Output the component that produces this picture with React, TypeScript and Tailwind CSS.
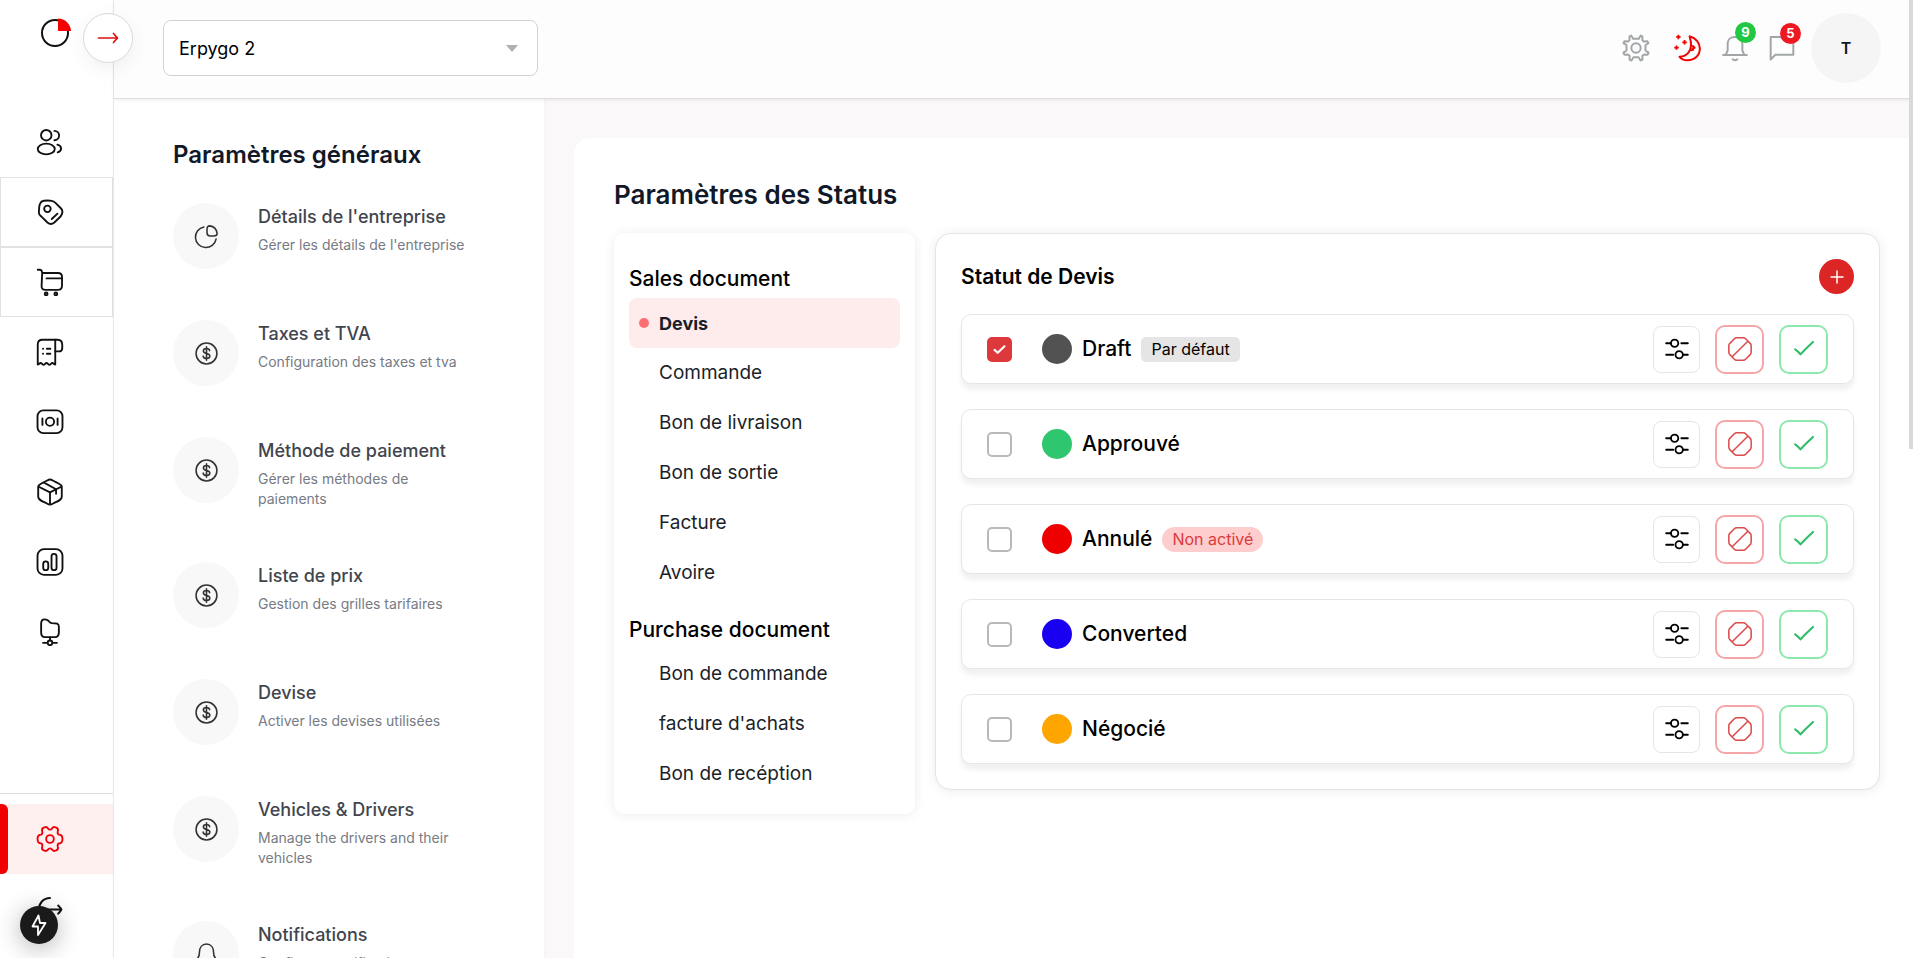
import { useState, type ReactNode } from "react";

type IconProps = { size?: number; stroke?: number; className?: string; children?: ReactNode };

function Icon({ size = 28, stroke = 1.5, className = "", children }: IconProps) {
  return (
    <svg
      width={size}
      height={size}
      viewBox="0 0 24 24"
      fill="none"
      stroke="currentColor"
      strokeWidth={stroke}
      strokeLinecap="round"
      strokeLinejoin="round"
      aria-hidden="true"
      className={`shrink-0 ${className}`}
    >
      {children}
    </svg>
  );
}

const UsersIcon = () => (
  <Icon stroke={1.600}>
    <circle cx="8.800" cy="6.200" r="4.500" />
    <ellipse cx="8.800" cy="18" rx="7.300" ry="4.600" />
    <path d="M15.800 2.500a4 4 0 0 1 0 8M18.300 14.300c2 .5 3.200 1.700 3.200 3.300s-1 2.700-2.900 3.300" />
  </Icon>
);

const TagIcon = () => (
  <Icon stroke={1.600}>
    <circle cx="9.800" cy="9.300" r="2.800" />
    <path d="M2.500 12.800C2.500 9 2.700 6.500 3.500 4.800 4.100 3.300 5.100 2.600 6.700 2.400c2.300-.3 4.800-.3 6.800 0 1.400.2 2.200.8 3.200 1.800l4.800 4.800c1.200 1.300 1.400 2.800.8 4.600-.5 1.400-1.500 2.600-2.800 3.800L15.700 21c-2 1.800-3.900 1.800-5.900 0l-5.300-5.200c-1.200-1.100-2-1.600-2-3z" />
    <path d="M13.500 18l4.900-4.600" />
  </Icon>
);

const CartIcon = () => (
  <Icon stroke={1.600}>
    <path d="M1.500 1.500h1.700c1.100 0 1.800.7 1.900 1.800l.2 1M5.300 4.300h13.500c2.300 0 3.500 1 3.500 3.200v7.500c0 2.600-1.200 3.800-3.600 3.800H8.100c-2.300 0-3.400-1.200-3.300-3.500z" />
    <path d="M9 8.900h13" />
    <circle cx="8.700" cy="22.200" r="1.200" />
    <circle cx="17" cy="22.200" r="1.200" />
  </Icon>
);

const ReceiptIcon = () => (
  <Icon stroke={1.600}>
    <path d="M16.500 22.700V1.500H5.500C2.700 1.500 1.500 2.800 1.500 5.500v17.200c1 0 1.500-1.300 2.500-1.300s1.500 1.600 2.500 1.600 1.500-1.600 2.500-1.600 1.500 1.600 2.500 1.600 1.500-1.600 2.500-1.600 1.500 1.300 2.500 1.300z" />
    <path d="M16.500 1.500h2c2.700 0 4 1.700 4 4.500v2.500c0 2-1 3-2.800 3h-3.200" />
    <path d="M6 9.200h.1M9.300 9.200h3M6 13.500h.1M9.300 13.500h3" />
  </Icon>
);

const MoneyIcon = () => (
  <Icon stroke={1.600}>
    <rect x="1.300" y="2" width="21.400" height="19.500" rx="5" />
    <circle cx="12" cy="11.800" r="3.500" />
    <path d="M5.500 9v5.500M18.500 9v5.500" />
  </Icon>
);

const PackageIcon = () => (
  <Icon stroke={1.600}>
    <path d="M12 22.800c-.8 0-1.600-.4-3.100-1.200-5.100-2.300-7-3.300-7-5.500V7.300M12 22.800c.8 0 1.600-.4 3.100-1.200 5.100-2.300 7-3.300 7-5.500V7.300M12 22.800V12.300M1.900 7.300c0-1.400 1.600-2.100 5.100-3.800 2.700-1.300 3.800-2.200 5-2.200s2.300.9 5 2.200c3.500 1.700 5.100 2.400 5.100 3.800M1.900 7.300 12 12.300l10.100-5M6.500 3.800l10.700 5.800v4" />
  </Icon>
);

const ChartIcon = () => (
  <Icon stroke={1.600}>
    <rect x="1.300" y="1" width="21.400" height="22" rx="5.500" />
    <rect x="6.200" y="11.500" width="4.300" height="7.500" rx="2.100" />
    <rect x="13.300" y="5" width="4.300" height="14" rx="2.100" />
  </Icon>
);

const FolderIcon = () => (
  <Icon stroke={1.600}>
    <path d="M4.400 5c0-2 .8-3.800 2.900-3.800 2.400 0 3 .2 3.900 1.800.7 1.100 1.200 1.300 2.500 1.400 4 0 5.900 0 5.900 3.200v4.900c0 2.800-.8 3.900-3.200 3.900H7.600c-2.400 0-3.200-1.100-3.200-3.900z" />
    <path d="M12 16.600v2.700M6 21.300h3.800M14.200 21.300H18" />
    <circle cx="12" cy="21.300" r="2" />
  </Icon>
);

const SettingsIcon = () => (
  <Icon stroke={1.600}>
    <circle cx="12" cy="12" r="3.300" />
    <path d="M12 4c.7 0 1.200-.3 1.700-1.100.5-.8 1.300-1.300 2.200-1.100l1.500.5c1.300.5 1.700 1.700 1.300 3-.4 1.500-.1 2.500.9 2.900 2.500 0 3.100 1.200 3.100 3.800s-.6 3.800-3.100 3.800c-1 .4-1.300 1.400-.9 2.900.4 1.300 0 2.500-1.300 3l-1.500.5c-.9.2-1.700-.3-2.200-1.100S12.700 20 12 20s-1.200.3-1.700 1.100c-.5.8-1.300 1.300-2.200 1.100l-1.500-.5c-1.300-.5-1.700-1.700-1.300-3 .4-1.500.1-2.500-.9-2.900-2.500 0-3.100-1.200-3.100-3.800s.6-3.800 3.100-3.800c1-.4 1.300-1.400.9-2.900-.4-1.300 0-2.500 1.300-3l1.500-.5c.9-.2 1.700.3 2.200 1.100S11.300 4 12 4z" />
  </Icon>
);

const LogoutIcon = () => (
  <Icon stroke={1.700}>
    <path d="M12 2.500C6.500 2.500 2.500 6.800 2.500 12.500s4 9.500 9.500 9.500M8.500 12.500h13.300M19 9c1.500 1.700 2.800 2.600 2.800 3.500S20.500 14.300 19 16" />
  </Icon>
);

const DollarIcon = () => (
  <Icon size={25}>
    <circle cx="12" cy="12" r="10" />
    <path d="M15 9.300c-.2-1.300-1.400-2.100-3-2.100-1.700 0-3 .9-3 2.400 0 3.300 6.200 1.500 6.200 4.800 0 1.500-1.300 2.400-3.200 2.400-1.800 0-3.100-.8-3.200-2.300M12 5.500v13" />
  </Icon>
);

const PieIcon = () => (
  <Icon size={25}>
    <path d="M9.500 2.800A10 10 0 1 0 21.200 14.500" />
    <path d="M12.500 5c0-2 .7-3.200 2.700-3.200 4 .6 6.300 3 7 7 0 2-1.200 2.700-3.200 2.700h-3.500c-2 0-3-1-3-3z" />
  </Icon>
);

const BellIcon = () => (
  <Icon size={25}>
    <path d="M5.200 10c0-4.500 2.500-8 6.800-8s6.800 3.500 6.800 8c0 3 .4 3.700 1.500 5.200 1 1.400.3 2.800-1.500 2.800H5.200c-1.800 0-2.500-1.400-1.500-2.800C4.800 13.700 5.200 13 5.200 10zM9 21c.8.7 1.800 1 3 1s2.200-.3 3-1" />
  </Icon>
);

const SlidersIcon = () => (
  <Icon size={26} stroke={1.700}>
    <path d="M2 6.700h4.300M16 6.700h6M2 17.300h6.500M17.500 17.300H22" />
    <circle cx="9.800" cy="6.700" r="3.400" />
    <circle cx="14" cy="17.300" r="3.400" />
  </Icon>
);

const BanIcon = () => (
  <Icon size={26} stroke={1.400}>
    <path d="M9 1.700h6c1 0 1.500.2 2.200.9l4.200 4.200c.7.700.9 1.200.9 2.200v6c0 1-.2 1.500-.9 2.200l-4.200 4.200c-.7.700-1.200.9-2.200.9H9c-1 0-1.500-.2-2.200-.9l-4.200-4.200c-.7-.7-.9-1.200-.9-2.200V9c0-1 .2-1.500.9-2.200l4.200-4.200c.7-.7 1.200-.9 2.200-.9zM5 19 19 5" />
  </Icon>
);

const nav: { label: string; icon: ReactNode; boxed?: boolean }[] = [
  { label: "Clients", icon: <UsersIcon /> },
  { label: "Ventes", icon: <TagIcon />, boxed: true },
  { label: "Achats", icon: <CartIcon />, boxed: true },
  { label: "Factures", icon: <ReceiptIcon /> },
  { label: "Paiements", icon: <MoneyIcon /> },
  { label: "Stock", icon: <PackageIcon /> },
  { label: "Rapports", icon: <ChartIcon /> },
  { label: "Fichiers", icon: <FolderIcon /> },
];

const settings: { title: string; text: string; icon: ReactNode }[] = [
  { title: "Détails de l'entreprise", text: "Gérer les détails de l'entreprise", icon: <PieIcon /> },
  { title: "Taxes et TVA", text: "Configuration des taxes et tva", icon: <DollarIcon /> },
  { title: "Méthode de paiement", text: "Gérer les méthodes de paiements", icon: <DollarIcon /> },
  { title: "Liste de prix", text: "Gestion des grilles tarifaires", icon: <DollarIcon /> },
  { title: "Devise", text: "Activer les devises utilisées", icon: <DollarIcon /> },
  { title: "Vehicles & Drivers", text: "Manage the drivers and their vehicles", icon: <DollarIcon /> },
  { title: "Notifications", text: "Configurer notifications", icon: <BellIcon /> },
];

const groups = [
  { title: "Sales document", items: ["Devis", "Commande", "Bon de livraison", "Bon de sortie", "Facture", "Avoire"] },
  { title: "Purchase document", items: ["Bon de commande", "facture d'achats", "Bon de recéption"] },
];

const statuses = [
  { name: "Draft", dot: "bg-[#525252]", tag: "default" },
  { name: "Approuvé", dot: "bg-[#2fc670]", tag: "" },
  { name: "Annulé", dot: "bg-[#ee0000]", tag: "off" },
  { name: "Converted", dot: "bg-[#1a00f0]", tag: "" },
  { name: "Négocié", dot: "bg-[#ffa500]", tag: "" },
];

function Sidebar() {
  return (
    <aside className="flex w-[114px] shrink-0 flex-col border-r border-[#ececec] bg-white pb-3.5 shadow-[1px_0_4px_rgba(0,0,0,0.04)]">
      <a href="#accueil" aria-label="Accueil" className="flex h-[107px] pt-4 pl-10">
        <svg width="32" height="32" viewBox="0 0 32 32" fill="none" aria-hidden="true">
          <circle cx="15" cy="17" r="13" stroke="#111" strokeWidth="2" />
          <path d="M18 2.500a13 13 0 0 1 13 12.500H18z" fill="#f50000" />
        </svg>
      </a>
      <nav className="flex flex-col">
        {nav.map((n) => (
          <a
            key={n.label}
            href="#menu"
            aria-label={n.label}
            className={`flex h-[70px] items-center border pl-[35px] text-[#111] ${n.boxed ? "border-[#e2e2e2]" : "border-transparent"}`}
          >
            {n.icon}
          </a>
        ))}
      </nav>
      <div className="mt-auto border-t border-[#dedede] pt-2.5">
        <a href="#parametres" aria-label="Paramètres" className="flex h-[70px] items-center bg-[#fff0f0] text-[#ee0008]">
          <span className="h-full w-2 rounded-r-md bg-[#f00000]" />
          <span className="pl-7">
            <SettingsIcon />
          </span>
        </a>
        <button type="button" aria-label="Déconnexion" className="flex h-[70px] w-full items-center pl-9 text-[#111]">
          <LogoutIcon />
        </button>
      </div>
    </aside>
  );
}

function Header() {
  return (
    <header className="z-10 flex h-[99px] shrink-0 items-center justify-between border-b border-[#dedede] bg-[#fdfdfd] pr-8 pb-0.5 pl-[49px] shadow-[0_1px_4px_rgba(0,0,0,0.08)]">
      <div className="relative w-[375px]">
        <select
          aria-label="Entreprise"
          className="h-[56px] w-full appearance-none rounded-lg border border-[#d2d2d2] bg-white px-[15px] text-[18px] text-black"
        >
          <option>Erpygo 2</option>
        </select>
        <svg width="12" height="7" viewBox="0 0 12 7" aria-hidden="true" className="pointer-events-none absolute top-[25px] right-5">
          <path d="M0 0h12L6 7z" fill="#b0b0b0" />
        </svg>
      </div>
      <div className="flex items-center text-[#a3a6a8]">
        <button type="button" aria-label="Réglages">
          <Icon size={28} stroke={1.700}>
            <circle cx="12" cy="12" r="4" />
            <path d="M9.500 4.100 8 1.400l-1.600.7.100 3.100-1.300 1.200-3.100-.2-.8 1.700 2.600 1.700v4.500L1.200 16l.8 1.700 3.100-.2 1.500 1.400-.2 3.100 1.700.7 1.700-2.700h4.400l1.700 2.700 1.700-.7-.2-3.100 1.500-1.400 3.100.2.800-1.700-2.700-1.900V9.600l2.500-1.700-.8-1.700-3.100.2-1.300-1.200.1-3.100-1.600-.7-1.500 2.700z" />
          </Icon>
        </button>
        <button type="button" aria-label="Mode sombre" className="ml-[23px] text-[#f00000]">
          <Icon size={28} stroke={1.700}>
            <path d="M14.200 2C20 3.500 23 8 23 12.500c0 6-4.500 10-10.500 10-3 0-5.500-1-7-3C12.500 19.500 18 13.500 14.200 2z" />
            <path d="M17 10.300l1.500 1.500-1.700.6.500 1.200-1.600.3" />
            <path d="M4.600.6v3.800M2.700 2.500h3.800M9.900 5.200V9M8 7.100h3.800M3 9.800v3.800M1.100 11.700h3.800" strokeWidth="1.500" strokeLinecap="butt" />
          </Icon>
        </button>
        <button type="button" aria-label="Notifications" className="relative ml-5">
          <Icon size={28} stroke={1.700}>
            <path d="M1.800 18h20.400M4 18l1.700-4V8c0-3.300 2.700-5.500 6.300-5.500S18.300 4.700 18.300 8v6L20 18M10 21.700c1.200 1 2.800 1 4 0" />
          </Icon>
          <span className="absolute -top-3 left-3.5 flex size-[21px] items-center justify-center rounded-full bg-[#22c744] text-[13px] font-bold text-white">9</span>
        </button>
        <button type="button" aria-label="Messages" className="relative ml-[19px]">
          <Icon size={28} stroke={1.700}>
            <path d="M2.300 2.500h19.400v15.300H6.300l-4 4z" />
          </Icon>
          <span className="absolute -top-[11px] left-3 flex size-[21px] items-center justify-center rounded-full bg-[#f01820] text-[13px] font-bold text-white">5</span>
        </button>
        <button type="button" aria-label="Profil" className="ml-[15px] flex size-[70px] items-center justify-center rounded-full bg-[#f5f5f5] text-[16px] font-semibold text-[#111827]">
          T
        </button>
      </div>
    </header>
  );
}

function SettingsList() {
  return (
    <section className="w-[430px] shrink-0 overflow-hidden bg-white pt-10 pr-[70px] pl-[59px] shadow-[0_0_4px_rgba(0,0,0,0.04)]">
      <h2 className="text-[24px] leading-8 font-semibold text-[#111827]">Paramètres généraux</h2>
      <ul className="mt-8">
        {settings.map((s) => (
          <li key={s.title}>
            <a href="#reglage" className="flex min-h-[117px] items-start gap-[19px]">
              <span className="flex size-[66px] shrink-0 items-center justify-center rounded-full bg-[#f8f8f8] text-[#333]">{s.icon}</span>
              <span className="block pb-[53px]">
                <span className="block text-[18px] leading-7 font-medium text-[#41454d]">{s.title}</span>
                <span className="mt-1 block text-[14px] leading-5 text-[#767b84]">{s.text}</span>
              </span>
            </a>
          </li>
        ))}
      </ul>
    </section>
  );
}

function StatusRow({ name, dot, tag, checked, onToggle }: { name: string; dot: string; tag: string; checked: boolean; onToggle: () => void }) {
  return (
    <li className="flex h-[70px] items-center rounded-[10px] border border-[#e6e6e6] bg-white px-[25px] shadow-[0_6px_5px_rgba(0,0,0,0.06)]">
      <label className="flex items-center text-[21px] leading-8 font-medium text-black">
        <span className="relative flex size-[25px]">
          <input
            type="checkbox"
            checked={checked}
            onChange={onToggle}
            className="size-[25px] appearance-none rounded-[5px] border-2 border-[#b9b9b9] bg-white checked:border-[#dd393d] checked:bg-[#dd393d]"
          />
          {checked && (
            <Icon size={17} stroke={3} className="pointer-events-none absolute top-1 left-1 text-white">
              <path d="M5 12.500l4.500 4.200L19 7.500" />
            </Icon>
          )}
        </span>
        <span className={`mr-2.5 ml-[30px] size-[30px] rounded-full ${dot}`} />
        {name}
      </label>
      {tag === "default" && <span className="ml-2.5 rounded-[5px] bg-[#e5e5e5] px-2.5 text-[16px] leading-[25px] text-black">Par défaut</span>}
      {tag === "off" && <span className="ml-2.5 rounded-full bg-[#fecdcd] px-2.5 text-[16px] leading-[25px] text-[#dc3b3b]">Non activé</span>}
      <div className="ml-auto flex items-center gap-[15px]">
        <button type="button" aria-label={`Configurer ${name}`} className="flex size-[47px] items-center justify-center rounded-lg border border-[#e6e6e6] text-black">
          <SlidersIcon />
        </button>
        <button type="button" aria-label={`Désactiver ${name}`} className="flex size-[49px] items-center justify-center rounded-[10px] border-2 border-[#f5a6a9] text-[#dc4a4a]">
          <BanIcon />
        </button>
        <button type="button" aria-label={`Activer ${name}`} className="flex size-[49px] items-center justify-center rounded-[10px] border-2 border-[#8de8ae] text-[#2dbd65]">
          <Icon size={26} stroke={1.900}>
            <path d="M3.800 12.300c1.300.8 3.300 2.500 5 4.700C12 13 16 9.500 20.300 5.500" />
          </Icon>
        </button>
      </div>
    </li>
  );
}

export default function App() {
  const [active, setActive] = useState("Devis");
  const [picked, setPicked] = useState("Draft");
  return (
    <div className="relative flex h-screen overflow-hidden bg-[#faf8f8] font-['Inter','Noto_Sans',sans-serif]">
      <Sidebar />
      <button
        type="button"
        aria-label="Ouvrir le menu"
        className="absolute top-[13px] left-[83px] z-20 flex size-[50px] items-center justify-center rounded-full border border-[#dadada] bg-white text-[#e01010] shadow-[0_6px_20px_rgba(0,0,0,0.06)]"
      >
        <Icon size={24} stroke={1.700}>
          <path d="M2.500 12h19M17.500 7.500c1.500 1.800 3 3.300 4 4.500-1 1.200-2.500 2.700-4 4.500" />
        </Icon>
      </button>
      <div className="flex min-w-0 flex-1 flex-col">
        <Header />
        <div className="flex min-h-0 flex-1">
          <SettingsList />
          <main className="ml-[30px] mt-[39px] min-w-0 flex-1 rounded-tl-2xl bg-white pt-10 pr-[33px] pl-10">
            <h1 className="text-[26px] leading-[34px] font-semibold text-[#111827]">Paramètres des Status</h1>
            <div className="mt-[21px] flex items-start gap-5">
              <nav className="w-[301px] shrink-0 rounded-[10px] bg-white px-[15px] pt-6 pb-[5px] shadow-[0_1px_12px_rgba(0,0,0,0.08)]">
                {groups.map((g) => (
                  <div key={g.title} className="pb-[10px]">
                    <h3 className="pt-1 pb-px text-[21px] leading-9 font-medium text-black">{g.title}</h3>
                    {g.items.map((item) => (
                      <button
                        key={item}
                        type="button"
                        onClick={() => setActive(item)}
                        className={`flex h-[50px] w-full items-center gap-2.5 rounded-lg px-2.5 text-left text-[#1b1f2a] ${active === item ? "bg-[#feeced] text-[18px] font-bold" : "text-[19px]"}`}
                      >
                        <span className={`size-2.5 rounded-full ${active === item ? "bg-[#fb6f74]" : "bg-transparent"}`} />
                        {item}
                      </button>
                    ))}
                  </div>
                ))}
              </nav>
              <section className="min-w-0 flex-1 rounded-2xl border border-[#e4e4e4] bg-white p-[25px] shadow-[0_1px_12px_rgba(0,0,0,0.08)]">
                <div className="flex h-[35px] items-center justify-between">
                  <h2 className="text-[21px] leading-8 font-semibold text-black">Statut de Devis</h2>
                  <button type="button" aria-label="Ajouter un statut" className="flex size-[35px] items-center justify-center rounded-full bg-[#dc2626] text-white">
                    <Icon size={18} stroke={2}>
                      <path d="M12 4v16M4 12h16" />
                    </Icon>
                  </button>
                </div>
                <ul className="mt-5 flex flex-col gap-[25px]">
                  {statuses.map((s) => (
                    <StatusRow key={s.name} {...s} checked={picked === s.name} onToggle={() => setPicked(s.name)} />
                  ))}
                </ul>
              </section>
            </div>
          </main>
        </div>
      </div>
      <div className="absolute top-0 right-0 z-30 h-[449px] w-1 bg-[#d9d9d9]" />
      <button
        type="button"
        aria-label="Actions rapides"
        className="absolute bottom-3.5 left-5 z-30 flex size-[38px] items-center justify-center rounded-full bg-[#1a1a1a] text-white shadow-[0_4px_24px_rgba(0,0,0,0.3)]"
      >
        <Icon size={24} stroke={1.800}>
          <path d="M11.500 2.500 5.500 13.500H11v8.500l7.500-12H13z" />
        </Icon>
      </button>
    </div>
  );
}
